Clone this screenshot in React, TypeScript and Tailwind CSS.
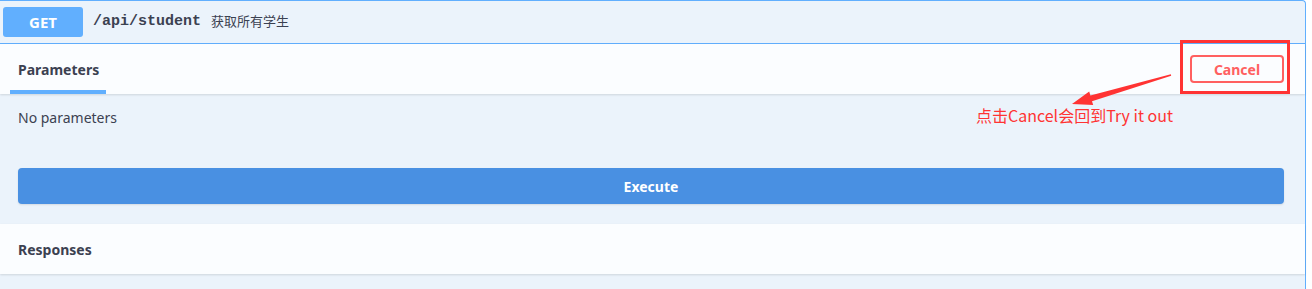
import React from 'react';

const sans = 'font-["Noto_Sans","Noto_Sans_CJK_SC",sans-serif]';

function SectionHeader({ title, active, children }: { title: string; active?: boolean; children?: React.ReactNode }) {
  return (
    <div className="flex h-[50px] items-center justify-between bg-[#fbfdff] pl-[10px] pr-[21px] shadow-[0_1px_2px_rgba(0,0,0,0.12)] relative z-10">
      <div className="relative flex h-full items-center px-2">
        <span className="text-[14px] font-bold text-[#3b4151]">{title}</span>
        {active && <span className="absolute bottom-0 left-0 h-[4px] w-[96px] bg-[#61affe]" />}
      </div>
      {children}
    </div>
  );
}

export default function App() {
  return (
    <div className={`relative h-[289px] w-[1312px] overflow-hidden bg-white ${sans}`}>
      <div className="h-full w-[1306px] rounded-tr-[4px] border-t border-r border-[#61affe] bg-[#ebf3fb]">
        {/* summary bar */}
        <div className="flex h-[43px] items-center border-b border-[#61affe] pl-[3px]">
          <span className="flex h-[30px] w-[80px] items-center justify-center rounded-[3px] bg-[#61affe] text-[15px] font-bold text-white">
            GET
          </span>
          <span className='ml-[10px] font-["Liberation_Mono",monospace] text-[15px] font-bold text-[#3b4151]'>/api/student</span>
          <span className="ml-[10px] text-[13px] text-[#3b4151]">获取所有学生</span>
        </div>

        <SectionHeader title="Parameters" active>
          <button className="h-[28px] w-[94px] rounded-[4px] border-2 border-[#ff6060] bg-transparent text-[14px] font-bold text-[#ff6060]">
            Cancel
          </button>
        </SectionHeader>

        <div className="pl-[18px] pr-[21px] pt-[14px] pb-[20px]">
          <p className="text-[14px] leading-[20px] text-[#3b4151]">No parameters</p>
          <button className="mt-[40px] h-[36px] w-full rounded-[4px] bg-[#4990e2] text-[14px] font-bold text-white shadow-[0_1px_2px_rgba(0,0,0,0.1)]">
            Execute
          </button>
        </div>

        <SectionHeader title="Responses" />
      </div>

      {/* annotation */}
      <div className="pointer-events-none absolute left-[1180px] top-[40px] z-20 h-[54px] w-[110px] border-[3px] border-[#ff3333]" />
      <svg className="pointer-events-none absolute left-0 top-0 z-20" width="1312" height="289">
        <polygon
          points="1170.8,74.2 1090.4,95.4 1089.2,91.6 1072,104 1093.2,105 1092,101.2 1171.2,75.8"
          fill="#ff3333"
        />
      </svg>
      <span className='absolute left-[976px] top-[103px] z-20 font-["Noto_Sans_CJK_SC",sans-serif] text-[16px] text-[#ff3333]'>
        点击Cancel会回到Try it out
      </span>
    </div>
  );
}
